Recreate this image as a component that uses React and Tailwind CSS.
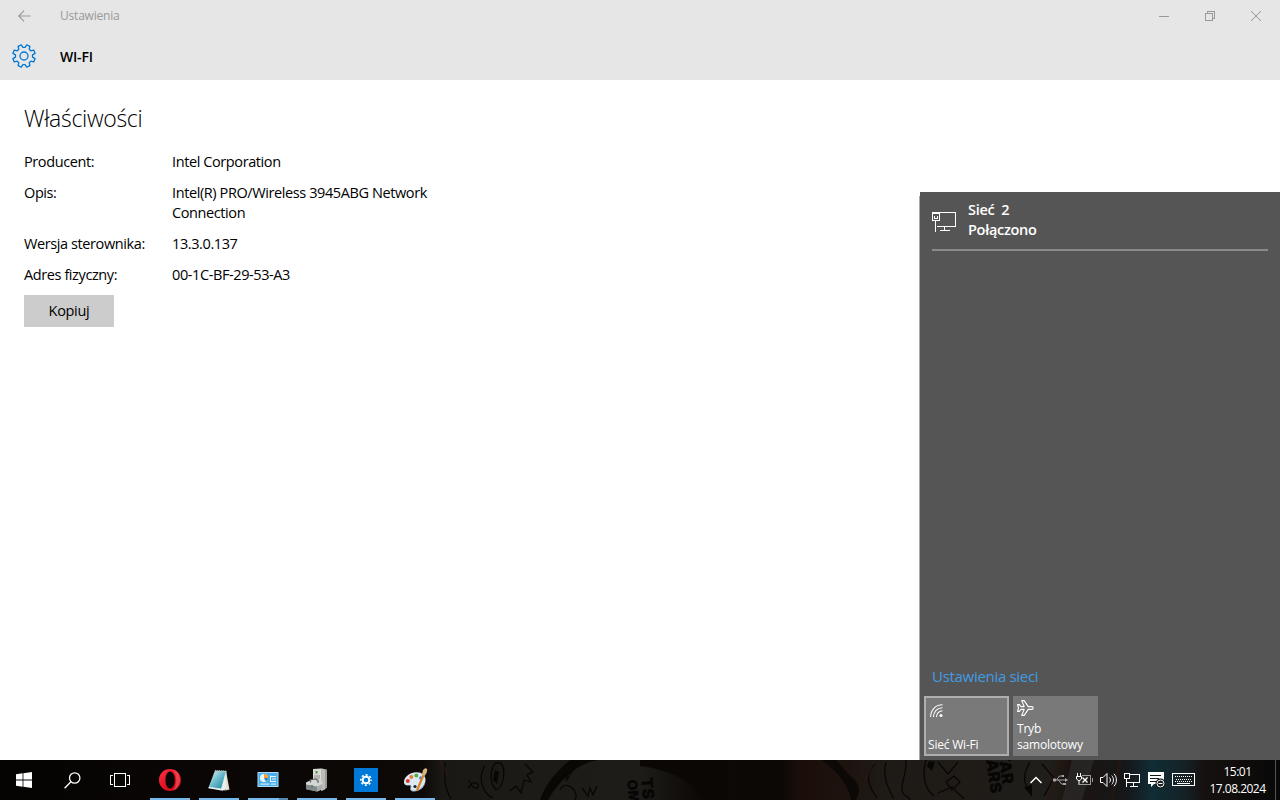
import React from 'react';
import clsx from 'clsx';

const properties = [
  { label: 'Producent:', value: 'Intel Corporation' },
  { label: 'Opis:', value: 'Intel(R) PRO/Wireless 3945ABG Network Connection' },
  { label: 'Wersja sterownika:', value: '13.3.0.137' },
  { label: 'Adres fizyczny:', value: '00-1C-BF-29-53-A3' },
];

const GearIcon = ({ size = 24, className }) => {
  const points = [];
  const teeth = 8;
  for (let i = 0; i < teeth; i++) {
    const base = (i * 360) / teeth;
    [[-15, 8.6], [-9, 11.4], [9, 11.4], [15, 8.6]].forEach(([offset, radius]) => {
      const angle = ((base + 22.5 + offset) * Math.PI) / 180;
      points.push(`${(12 + radius * Math.cos(angle)).toFixed(2)},${(12 + radius * Math.sin(angle)).toFixed(2)}`);
    });
  }
  return (
    <svg width={size} height={size} viewBox="0 0 24 24" fill="none" stroke="currentColor" strokeWidth="1.3" strokeLinejoin="round" className={className}>
      <polygon points={points.join(' ')} />
      <circle cx="12" cy="12" r="4" />
    </svg>
  );
};

const BackIcon = () => (
  <svg width="13" height="12" viewBox="0 0 13 12" fill="none" stroke="#999" strokeWidth="1.1">
    <path d="M12.5 6H1M6 .7.8 6 6 11.3" />
  </svg>
);

const WiredIcon = () => (
  <svg width="24" height="20" viewBox="0 0 24 20" fill="none" stroke="#fff" shapeRendering="crispEdges">
    <path d="M7 .5h16.500v14H4.500M.5.5h7v8h-7zM3.500 9v10.500M12.500 15v4M8 18.500h10M2.500 4v2.500h3V4" />
    <path d="M1 1.500h6" />
  </svg>
);

const WifiIcon = () => (
  <svg width="13" height="13" viewBox="0 0 13 13" fill="none" stroke="#fff" strokeWidth="1.1">
    <path d="M.6 13C.6 6 5.500.8 12.500.8M3.500 13c0-5.200 3.800-9.200 9-9.200M6.500 13c0-3.500 2.500-6.200 6-6.200" />
    <circle cx="11" cy="11.400" r="1.500" fill="#fff" stroke="none" />
  </svg>
);

const PlaneIcon = () => (
  <svg width="17" height="16" viewBox="0 0 17 16" fill="none" stroke="#fff" strokeWidth="1.1" strokeLinejoin="round">
    <path d="M.6 4.600h1.800l1.700 2h3.100L4.800.6h2.400l4 6h3.300c1 0 1.700.6 1.700 1.400s-.7 1.400-1.700 1.400h-3.300l-4 6H4.800l2.400-6H4.100l-1.700 2H.6L1.500 8z" />
  </svg>
);

const WindowsIcon = () => (
  <svg width="16" height="16" viewBox="0 0 16 16" fill="#fff">
    <path d="M0 2.200 6.600 1.300v6.300H0zM7.400 1.200 16 0v7.600H7.400zM0 8.400h6.600v6.300L0 13.800zM7.400 8.400H16V16l-8.600-1.200z" />
  </svg>
);

const SearchIcon = () => (
  <svg width="17" height="17" viewBox="0 0 17 17" fill="none" stroke="#fff" strokeWidth="1.300">
    <circle cx="10.700" cy="6" r="5.200" />
    <path d="M6.900 9.800.6 16.300" />
  </svg>
);

const TaskViewIcon = () => (
  <svg width="20" height="14" viewBox="0 0 20 14" fill="none" stroke="#fff" shapeRendering="crispEdges">
    <path d="M4.500.5h11v13h-11zM3 2.500H.5v9H3M17 2.500h2.500v9H17" />
  </svg>
);

const OperaIcon = () => (
  <svg width="24" height="24" viewBox="0 0 24 24">
    <defs>
      <linearGradient id="opera" x1="0" y1="0" x2="1" y2="1">
        <stop offset="0" stopColor="#ff3344" />
        <stop offset=".55" stopColor="#e0101f" />
        <stop offset="1" stopColor="#b80b16" />
      </linearGradient>
    </defs>
    <path fill="url(#opera)" fillRule="evenodd" d="M12 1c6.300 0 11 4.800 11 11s-4.700 11-11 11S1 18.200 1 12 5.700 1 12 1zm0 2.600C9.100 3.600 7.500 7.400 7.500 12s1.600 8.400 4.500 8.400 4.800-3.800 4.800-8.400S14.900 3.600 12 3.600z" />
    <path fill="#ff6670" opacity=".55" d="M15 2c4.500 1.200 7 5 7 9.500S19.500 21 15 22.200c2.200-2.500 3.200-6 3.200-10.200S17.200 4.500 15 2z" />
  </svg>
);

const NotepadIcon = () => (
  <svg width="24" height="24" viewBox="0 0 24 24">
    <defs>
      <linearGradient id="note" x1="0" y1="0" x2="1" y2="1">
        <stop offset="0" stopColor="#d9f3f6" />
        <stop offset=".5" stopColor="#65b9ca" />
        <stop offset="1" stopColor="#217f98" />
      </linearGradient>
    </defs>
    <path fill="#e5dfc8" d="m19 3 3.500 18.500-4 1z" />
    <path fill="#b8d9dc" d="m8 2.500 11.500.5-1 19.500L1.500 20z" />
    <path fill="url(#note)" d="m8.500 3.500 10 .5-4.300 16.800L2 18.800z" />
    <path fill="#e9eff0" d="m1.500 19 12.700 1.800 4.600-15.500.4 15.200-3.700 2.300L1.500 20.300z" />
    <path stroke="#a9b6b8" strokeWidth="1.600" strokeDasharray="1 1" d="m8 2.800 11 .5" />
  </svg>
);

const ControlPanelIcon = () => (
  <svg width="24" height="24" viewBox="0 0 24 24">
    <path fill="#a8dcf8" d="M1.500 4h21v15h-21z" />
    <path fill="#4baee8" d="M2.500 5h19v13h-19z" />
    <circle cx="8" cy="10" r="4" fill="#e8f7ff" />
    <path fill="#ff9e28" d="M8 10V6a4 4 0 0 1 4 4z" />
    <path fill="#1c7fc7" d="M8 10h4a4 4 0 0 1-2 3.400z" />
    <path stroke="#e6f7ff" fill="none" d="M14.500 7.500v6M14 8.500h6M16 11h4M14 13.500h6" />
    <path stroke="#c7eaff" strokeWidth="1.200" d="M4.500 16.200h9M15 16.200h5" />
  </svg>
);

const DevicesIcon = () => (
  <svg width="24" height="24" viewBox="0 0 24 24">
    <path fill="#d9d9d5" d="m8 1 8-.5v18L8 20z" />
    <path fill="#999994" d="m16 .5 6 1V20l-6 3z" />
    <path fill="#bcbcb6" d="m16 .5 4 .8v20.200l-4 1.500z" />
    <path fill="#3aa33d" d="M10.500 3h2v2.500h-2z" />
    <path stroke="#8c8c87" d="M9 8h6M9 10h6" />
    <path fill="#d4d6d6" d="M1 14.500 6 12h10l1.500 3v6L12 23.500 1 21z" />
    <path fill="#82898b" d="m1 16.500 11 2v5L1 21.200z" />
    <path fill="#a8adae" d="m12 18.500 5.500-2.500v5L12 23.500z" />
    <path stroke="#5a6062" fill="none" strokeWidth="1.200" d="M5.500 14.500v-2.800l5-.7 2.500 1.400V15M7 17v2.500" />
  </svg>
);

const SettingsTileIcon = () => (
  <div className="flex size-6 items-center justify-center bg-[#0078d7]">
    <svg width="12" height="12" viewBox="0 0 12 12" fill="none" stroke="#fff">
      <circle cx="6" cy="6" r="3.300" strokeWidth="1.900" />
      <circle cx="6" cy="6" r="5.100" strokeWidth="1.700" strokeDasharray="2 2.005" strokeDashoffset="1" />
    </svg>
  </div>
);

const PaintIcon = () => (
  <svg width="25" height="24" viewBox="0 0 25 24">
    <path fill="#dce9f3" d="M11 4.500C17 3 23 6.500 22.500 12.500 22 18 16.500 23 11 23c-3 0-3.500-2-3-3.500.5-2-.5-2.500-2.500-2.300C2.500 17.500 1 16.500 1 14c0-4.500 4.500-8.300 10-9.500z" />
    <path fill="#9fbdd3" d="M2 16.500c2 1.500 5 .2 6 1.500s-1.500 4 2 4.500c6 .5 11-4 12.400-8.500C22 19 16.500 23.500 11 23.500c-3.500 0-4.200-2-3.500-4 .5-1.500-.5-2-2-1.900-1.500 0-2.700-.2-3.500-1.100z" />
    <circle cx="4.800" cy="13" r="2" fill="#d93831" />
    <circle cx="8.300" cy="9" r="2" fill="#e67b2e" />
    <circle cx="13.300" cy="7.500" r="2" fill="#57ad43" />
    <circle cx="17.800" cy="10" r="1.800" fill="#4f8bd0" />
    <circle cx="12" cy="18.500" r="1.600" fill="#1c242b" />
    <path stroke="#d98226" strokeWidth="2.200" d="M20.500 7 14 22.500" />
    <path fill="#d6b47c" d="m19 6.500 1-4.500 2.500-2 1.800 1.200-.6 3.500L21.500 8z" />
  </svg>
);

const apps = [
  { name: 'Opera', icon: OperaIcon },
  { name: 'Notatnik', icon: NotepadIcon },
  { name: 'Panel sterowania', icon: ControlPanelIcon, grouped: true },
  { name: 'Menedżer', icon: DevicesIcon },
  { name: 'Ustawienia', icon: SettingsTileIcon },
  { name: 'Paint', icon: PaintIcon },
];

// Dimmed desktop wallpaper showing through the translucent taskbar
const TaskbarBackdrop = () => (
  <svg className="absolute inset-0" width="1280" height="40" viewBox="0 0 1280 40" fill="none" aria-hidden="true">
    <defs>
      <linearGradient id="wall" gradientUnits="userSpaceOnUse" x1="0" x2="1280" y1="0" y2="0">
        <stop offset="0" stopColor="#050403" />
        <stop offset=".1" stopColor="#080504" />
        <stop offset=".33" stopColor="#0d0907" />
        <stop offset=".345" stopColor="#191815" />
        <stop offset=".42" stopColor="#1d1b17" />
        <stop offset=".5" stopColor="#1e1c18" />
        <stop offset=".545" stopColor="#0c0906" />
        <stop offset=".61" stopColor="#0c0806" />
        <stop offset=".625" stopColor="#1b0e0a" />
        <stop offset=".66" stopColor="#1d130e" />
        <stop offset=".69" stopColor="#1e1a16" />
        <stop offset=".82" stopColor="#201e1a" />
        <stop offset=".835" stopColor="#1c1310" />
        <stop offset=".88" stopColor="#161719" />
        <stop offset=".9" stopColor="#102c35" />
        <stop offset=".925" stopColor="#152227" />
        <stop offset=".94" stopColor="#16110f" />
        <stop offset="1" stopColor="#080808" />
      </linearGradient>
    </defs>
    <path fill="url(#wall)" d="M0 0h1280v40H0z" />
    <path fill="#0b0705" d="M548 40c14-24 32-37 50-40h-28c-12 10-25 24-30 40zM640 0h88v40h-24c-14-20-32-30-64-34z" />
    <path fill="#0b0806" d="M822 0h14l16 18c10 8 7 16 4 22h-5c-2-16-16-30-29-40z" />
    <path stroke="#080706" strokeWidth="1.300" d="M445 2c0 15-2 23 6 37M468 28c8-12 14 0 8 0s-4-6-8-8M485 6c-8 12-2 28 8 32M495 3c-6 10-5 20 1 27 8-3 10-20 5-27zM525 4l8 8-6 3 4 7-7-2-3 13-5-7-6 5M548 33l20-22-2 10 10-16M560 30c6-12 20 2 15 10M582 28l6 8 2-8 3 7 4-9" />
    <path stroke="#080706" strokeWidth="1.300" d="M875 4c-10 10-8 20 2 34M886 2c-4 14 2 26 8 37M906 0c1 14-5 22-4 30s8 6 8 10M926 0c-5 18 0 30 8 36M938 2l10 12 10-12M946 22l8-6 6 6-8 8zM938 33l14-6 12 12M1030 2c-6 10-9 20 2 34M1042 4l12 14-10 18" />
    <path fill="#080706" d="m929 1 6 1-3 9-5-5zM495 10l4 2-2 12-4-4zM1024 28l8-4v12z" />
    <g fill="#070605" fontFamily="Inter, sans-serif" fontWeight="900">
      <text transform="translate(641 18) rotate(85)" fontSize="16">TS</text>
      <text transform="translate(627 20) rotate(85)" fontSize="14">OM</text>
      <text transform="translate(998 -8) rotate(82)" fontSize="16">TAR</text>
      <text transform="translate(986 0) rotate(82)" fontSize="16">ARS</text>
    </g>
    <path stroke="#2a1710" strokeWidth="3" opacity=".6" d="M440 0l9 18M875 0l-10 20M1060 0l-12 40M1120 0l-8 40" />
    <path fill="#36373a" opacity=".45" d="M1072 0h22l-12 40h-20z" />
  </svg>
);

const TrayIcons = () => (
  <svg width="168" height="18" viewBox="0 0 168 18" fill="none" stroke="#fff">
    {/* overflow chevron */}
    <path strokeWidth="1.500" d="m2.500 12 5.500-5.500 5.500 5.500" />
    {/* usb */}
    <g stroke="#a5a5a5">
      <path d="M26 9h12M28.500 9l3-4h3M30.500 9l3 4h3" />
      <circle cx="26.500" cy="9" r="1.700" fill="#a5a5a5" stroke="none" />
      <path fill="#a5a5a5" stroke="none" d="m37 7 3 2-3 2zM34 4h2v2h-2zM35 12h3v2h-3z" />
    </g>
    {/* unplugged battery */}
    <path d="M49.500 2v3M52.500 2v3M48.500 5.500h5v2.500l-2.500 2-2.500-2zM51 10v4" />
    <path stroke="#9a9a9a" shapeRendering="crispEdges" d="M54 4.500h8.500v9h-11M64 7v4" />
    <path strokeWidth="1.300" d="m54.500 6.500 5 5M59.500 6.500l-5 5" />
    {/* volume */}
    <path d="M72.500 6.500h2.500l4-4v13l-4-4h-2.500z" />
    <path d="M81.500 6.500c1.200 1.500 1.200 3.500 0 5M83.800 4.600c2.200 2.500 2.200 6.300 0 8.800M86 2.800c3.200 3.500 3.200 8.900 0 12.400" />
    {/* wired network */}
    <path shapeRendering="crispEdges" d="M101 3.500h10.500v8h-12.500M96.500 2.500h5v5h-5zM98.500 8v7.500M105.500 12v3M102 15.500h8" />
    {/* action center */}
    <path fill="#fff" stroke="none" d="M120 1h16v12h-10l-3 3v-3h-3z" />
    <path stroke="#16191b" shapeRendering="crispEdges" d="M122 4.500h11M122 7.500h9M122 10.500h6" />
    <circle cx="132.500" cy="12.500" r="3.800" fill="#1b2529" stroke="#111" strokeWidth="2.500" />
    <circle cx="132.500" cy="12.500" r="3.500" />
    <path d="M130.500 12.500h4" />
    {/* touch keyboard */}
    <path shapeRendering="crispEdges" d="M144.500 2.500h22v12h-22z" />
    <path shapeRendering="crispEdges" strokeDasharray="1 1" d="M147 5.500h18M148 8.500h16M147 10.500h18" />
    <path shapeRendering="crispEdges" d="M149 12.500h13" />
  </svg>
);

const WindowHeader = () => (
  <header className="h-20 bg-[#e6e6e6]">
    <div className="flex h-8 items-center justify-between">
      <div className="flex items-center">
        <button aria-label="Wstecz" className="flex w-[60px] items-center pl-[17.5px]">
          <BackIcon />
        </button>
        <span className="text-[12px] leading-4 tracking-[-0.2px] text-[#999]">Ustawienia</span>
      </div>
      <div className="flex pr-px text-[#999]">
        <button aria-label="Minimalizuj" className="flex h-8 w-[46px] items-center justify-center">
          <svg width="10" height="10" stroke="currentColor" shapeRendering="crispEdges"><path d="M0 5.500h10" /></svg>
        </button>
        <button aria-label="Przywróć" className="flex h-8 w-[46px] items-center justify-center">
          <svg width="10" height="10" fill="none" stroke="currentColor" shapeRendering="crispEdges"><path d="M.5 2.500h7v7h-7zM2.500 2V.5h7v7H8" /></svg>
        </button>
        <button aria-label="Zamknij" className="flex h-8 w-[46px] items-center justify-center">
          <svg width="10" height="10" stroke="currentColor"><path d="m0 0 10 10M10 0 0 10" /></svg>
        </button>
      </div>
    </div>
    <div className="flex h-12 items-center pl-3">
      <GearIcon className="text-[#0078d7]" />
      <h1 className="ml-6 pt-0.5 text-[14px] leading-5 font-semibold tracking-[-0.2px]">WI-FI</h1>
    </div>
  </header>
);

const NetworkFlyout = () => (
  <aside className="absolute right-0 bottom-10 flex h-[568px] w-[360px] flex-col bg-[#555] text-white shadow-[-1px_4px_0_#aaa]">
    <div className="mx-3 flex h-[59px] border-b-2 border-[#8a8a8a]">
      <div className="w-9 pt-5">
        <WiredIcon />
      </div>
      <div className="pt-2 text-[14.5px] leading-5 font-semibold tracking-[-0.3px] whitespace-pre">
        <p>{'Sieć  2'}</p>
        <p>Połączono</p>
      </div>
    </div>
    <a className="mt-auto ml-3 text-[15px] leading-5 tracking-[-0.3px] text-[#429ce3]">Ustawienia sieci</a>
    <div className="flex gap-1 p-1 pt-2.5 text-[12px] leading-4">
      <button className="flex h-[60px] w-[85px] flex-col justify-between border-2 border-[#aeaeae] bg-[#797979] pt-[6px] pb-[1px] pl-[2px] text-left">
        <span className="pl-0.5"><WifiIcon /></span>
        <span className="tracking-[-0.2px]">Sieć Wi-Fi</span>
      </button>
      <button className="flex h-[60px] w-[85px] flex-col justify-between bg-[#797979] pt-1 pb-[3px] pl-1 text-left">
        <PlaneIcon />
        <span className="tracking-[-0.2px]">Tryb<br />samolotowy</span>
      </button>
    </div>
  </aside>
);

const Taskbar = () => (
  <footer className="relative h-10 bg-black text-white">
    <TaskbarBackdrop />
    <div className="relative flex h-10">
      <button aria-label="Start" className="flex w-12 items-center justify-center"><WindowsIcon /></button>
      <button aria-label="Szukaj" className="flex w-12 items-center justify-center"><SearchIcon /></button>
      <button aria-label="Widok zadań" className="flex w-12 items-center justify-center"><TaskViewIcon /></button>
      <div className="ml-1.5 flex gap-[9px]">
        {apps.map(({ name, icon: Icon, grouped }) => (
          <button key={name} aria-label={name} className="flex h-10 w-10 flex-col items-center pt-2">
            <Icon />
            <span className="mt-auto flex h-0.5 w-full bg-[#76b9ed]">
              <span className={clsx('ml-auto h-full', grouped && 'w-[9px] bg-[#5688b0]')} />
            </span>
          </button>
        ))}
      </div>
      <div className="ml-auto flex items-center">
        <TrayIcons />
        <div className="ml-[9px] w-[65px] text-center text-[12px] leading-[17px] tracking-[-0.5px]">
          <p>15:01</p>
          <p>17.08.2024</p>
        </div>
        <div className="mr-1 ml-[5px] h-10 w-px bg-[#555]" />
      </div>
    </div>
  </footer>
);

export default function App() {
  return (
    <div className="relative flex h-[800px] w-[1280px] flex-col overflow-hidden bg-white font-['Open_Sans','Noto_Sans',sans-serif] text-black">
      <WindowHeader />
      <main className="flex-1 px-6 pt-[22px]">
        <h2 className="text-[23px] leading-8 font-light tracking-[-0.3px]">Właściwości</h2>
        <dl className="mt-[18px] flex flex-col gap-[11px] text-[14.5px] leading-5 tracking-[-0.4px]">
          {properties.map(({ label, value }) => (
            <div key={label} className="flex">
              <dt className="w-[148px] whitespace-nowrap">{label}</dt>
              <dd className="w-[290px]">{value}</dd>
            </div>
          ))}
        </dl>
        <button className="mt-2.5 h-8 w-[90px] bg-[#ccc] text-[14.5px] tracking-[-0.3px]">Kopiuj</button>
      </main>
      <NetworkFlyout />
      <Taskbar />
    </div>
  );
}
